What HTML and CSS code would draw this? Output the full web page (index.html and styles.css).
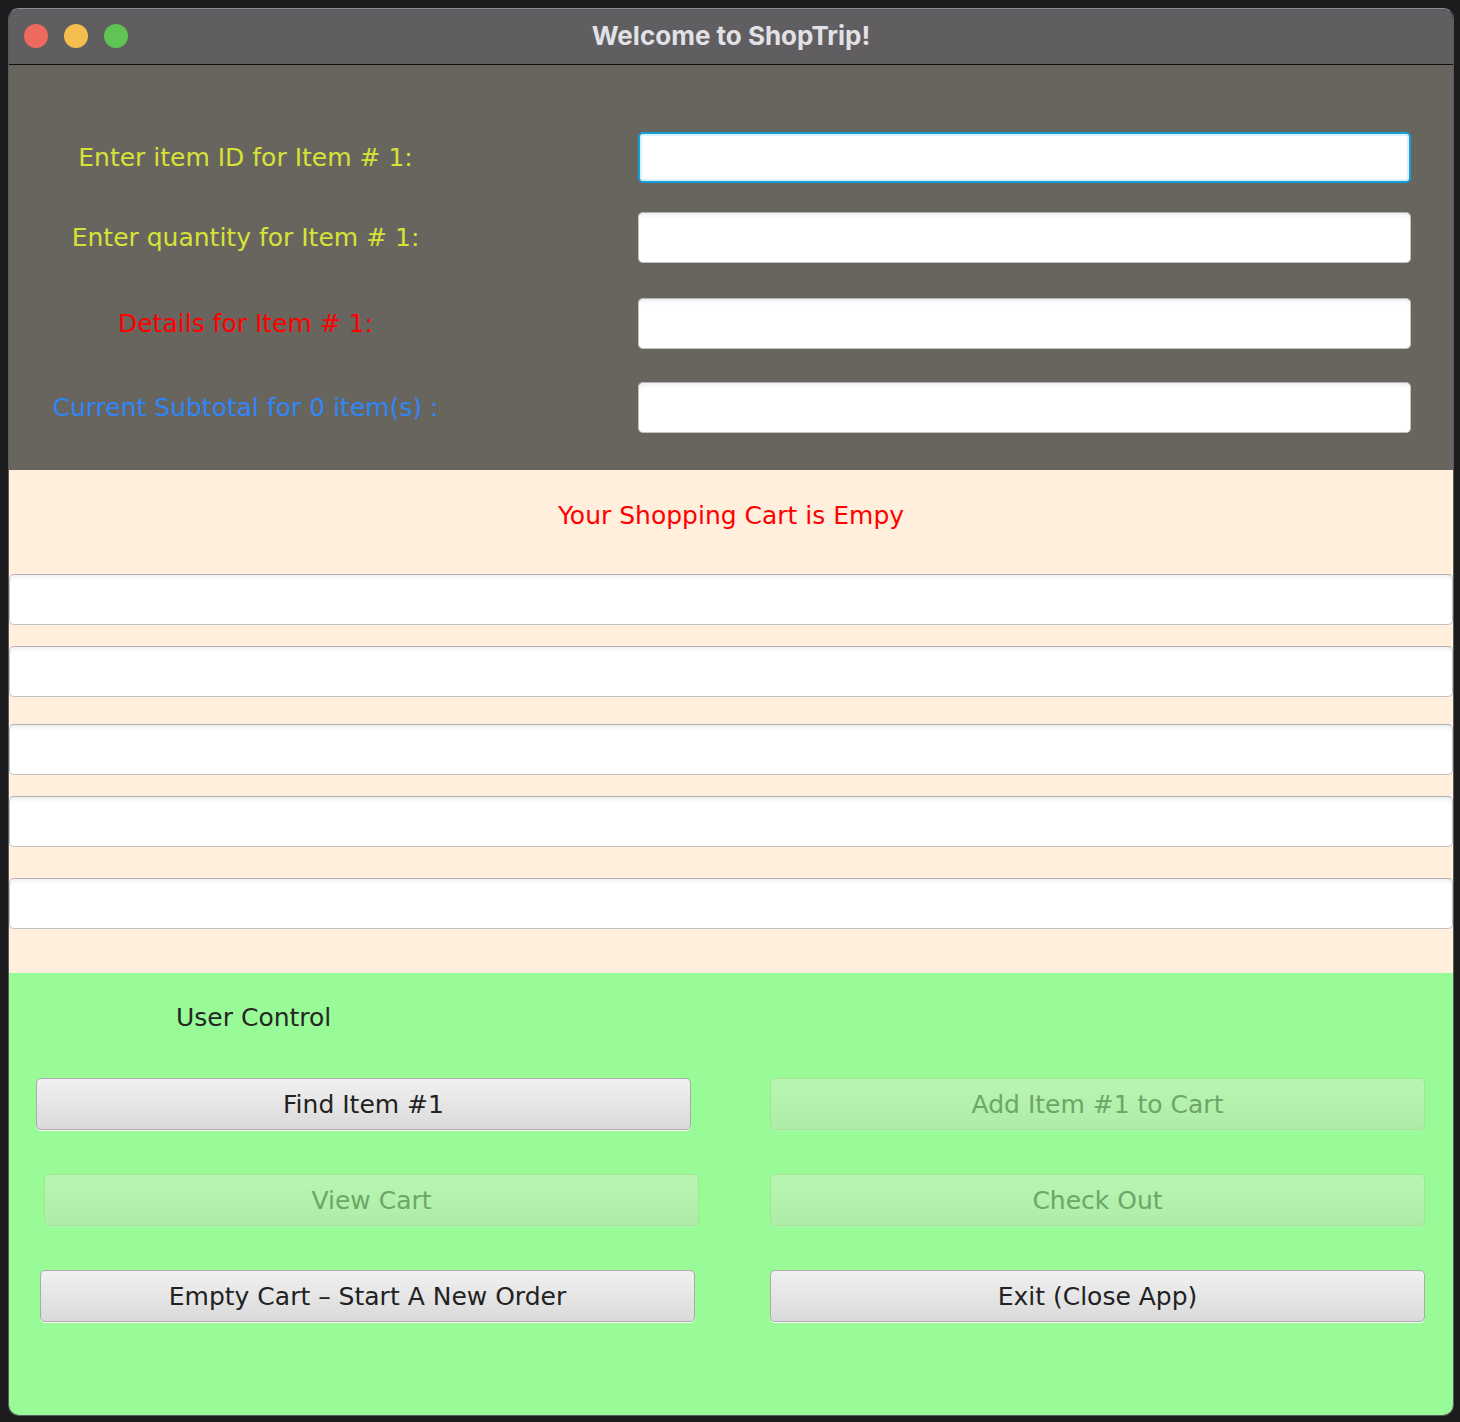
FILE: index.html
```html
<!DOCTYPE html>
<html lang="en">
<head>
<meta charset="utf-8">
<title>Welcome to ShopTrip!</title>
<link rel="stylesheet" href="styles.css">
</head>
<body>
<div class="window">
  <header class="titlebar">
    <div class="lights">
      <span class="light red"></span>
      <span class="light yellow"></span>
      <span class="light green"></span>
    </div>
    <div class="title">Welcome to ShopTrip!</div>
    <div></div>
  </header>

  <section class="entry">
    <div class="row r1">
      <div class="label yellow-text">Enter item ID for Item # 1:</div>
      <div class="field focused"></div>
    </div>
    <div class="row r2">
      <div class="label yellow-text">Enter quantity for Item # 1:</div>
      <div class="field"></div>
    </div>
    <div class="row r3">
      <div class="label red-text">Details for Item # 1:</div>
      <div class="field"></div>
    </div>
    <div class="row r4">
      <div class="label blue-text">Current Subtotal for 0 item(s) :</div>
      <div class="field"></div>
    </div>
  </section>

  <section class="cart">
    <div class="cart-title">Your Shopping Cart is Empy</div>
    <div class="field wide c1"></div>
    <div class="field wide c2"></div>
    <div class="field wide c3"></div>
    <div class="field wide c4"></div>
    <div class="field wide c5"></div>
  </section>

  <section class="controls">
    <div class="controls-title">User Control</div>
    <div class="buttons">
      <button class="btn b-left1">Find Item #1</button>
      <button class="btn disabled">Add Item #1 to Cart</button>
      <button class="btn disabled b-left2">View Cart</button>
      <button class="btn disabled">Check Out</button>
      <button class="btn b-left3">Empty Cart – Start A New Order</button>
      <button class="btn">Exit (Close App)</button>
    </div>
  </section>
</div>
</body>
</html>
```

FILE: styles.css
```css
* { box-sizing: border-box; }

html, body {
  margin: 0;
  padding: 0;
}

body {
  background: #1c1c1f;
  width: 1460px;
  height: 1422px;
  overflow: hidden;
  font-family: "DejaVu Sans", "Liberation Sans", sans-serif;
}

.window {
  margin: 8px 0 0 8px;
  width: 1446px;
  height: 1408px;
  border: 1px solid #5a595c;
  border-top-color: #8e8d91;
  border-radius: 11px;
  overflow: hidden;
  display: flex;
  flex-direction: column;
}

/* title bar */
.titlebar {
  height: 56px;
  flex: none;
  background: #605e61;
  border-bottom: 1px solid #111;
  display: grid;
  grid-template-columns: 1fr auto 1fr;
  align-items: center;
}

.lights {
  display: flex;
  gap: 16px;
  padding-left: 15px;
  padding-bottom: 2px;
}

.light {
  width: 24px;
  height: 24px;
  border-radius: 50%;
}
.light.red { background: #ed6a5e; }
.light.yellow { background: #f5bf4f; }
.light.green { background: #5fc454; }

.title {
  font-family: Inter, "Liberation Sans", sans-serif;
  font-weight: 700;
  font-size: 26px;
  color: #e2e1e5;
  padding-bottom: 3px;
}

/* entry panel */
.entry {
  height: 405px;
  flex: none;
  background: #68655f;
  padding-top: 67px;
}

.row {
  display: grid;
  grid-template-columns: 473px 773px;
  column-gap: 156px;
  align-items: center;
}
.r2 { margin-top: 29px; }
.r3 { margin-top: 35px; }
.r4 { margin-top: 33px; }

.label {
  text-align: center;
  font-size: 25px;
  line-height: 30px;
}
.yellow-text { color: #d8e236; }
.red-text { color: #ff0000; }
.blue-text { color: #2f86f8; }

.field {
  height: 51px;
  background: #fff;
  border: 1px solid #c2c2c2;
  border-top-color: #b2b2b2;
  border-radius: 5px;
  box-shadow: inset 0 5px 5px -3px rgba(0, 0, 0, 0.08);
}

.field.focused {
  border: 2px solid #15a0dc;
  box-shadow: inset 0 0 0 2px #dcf0fb;
}

/* cart panel */
.cart {
  height: 503px;
  flex: none;
  background: #ffefdc;
  padding-top: 31px;
}

.cart-title {
  text-align: center;
  color: #ff0000;
  font-size: 25px;
  line-height: 30px;
  margin-bottom: 43px;
}

.c2 { margin-top: 21px; }
.c3 { margin-top: 27px; }
.c4 { margin-top: 21px; }
.c5 { margin-top: 31px; }

/* controls panel */
.controls {
  flex: 1;
  background: #98fb98;
  padding-top: 30px;
}

.controls-title {
  margin-left: 167px;
  font-size: 25px;
  line-height: 30px;
  color: #262626;
}

.buttons {
  margin-top: 45px;
  display: grid;
  grid-template-columns: 761px 655px;
  grid-auto-rows: 52px;
  row-gap: 44px;
}

.btn {
  width: 655px;
  height: 52px;
  margin: 0;
  padding: 0;
  font-family: "DejaVu Sans", "Liberation Sans", sans-serif;
  font-size: 25px;
  color: #222;
  background: linear-gradient(#f1f1f1, #dadada);
  border: 1px solid #ababab;
  border-radius: 5px;
  box-shadow: 0 1px 0 #fdfdfd;
}

.b-left1 { margin-left: 27px; }
.b-left2 { margin-left: 35px; }
.b-left3 { margin-left: 31px; }

.btn.disabled {
  color: #6aa768;
  background: linear-gradient(#b9f6b2, #aeeca7);
  border-color: #a3e29b;
  box-shadow: 0 1px 0 #b1f3aa;
}
```
